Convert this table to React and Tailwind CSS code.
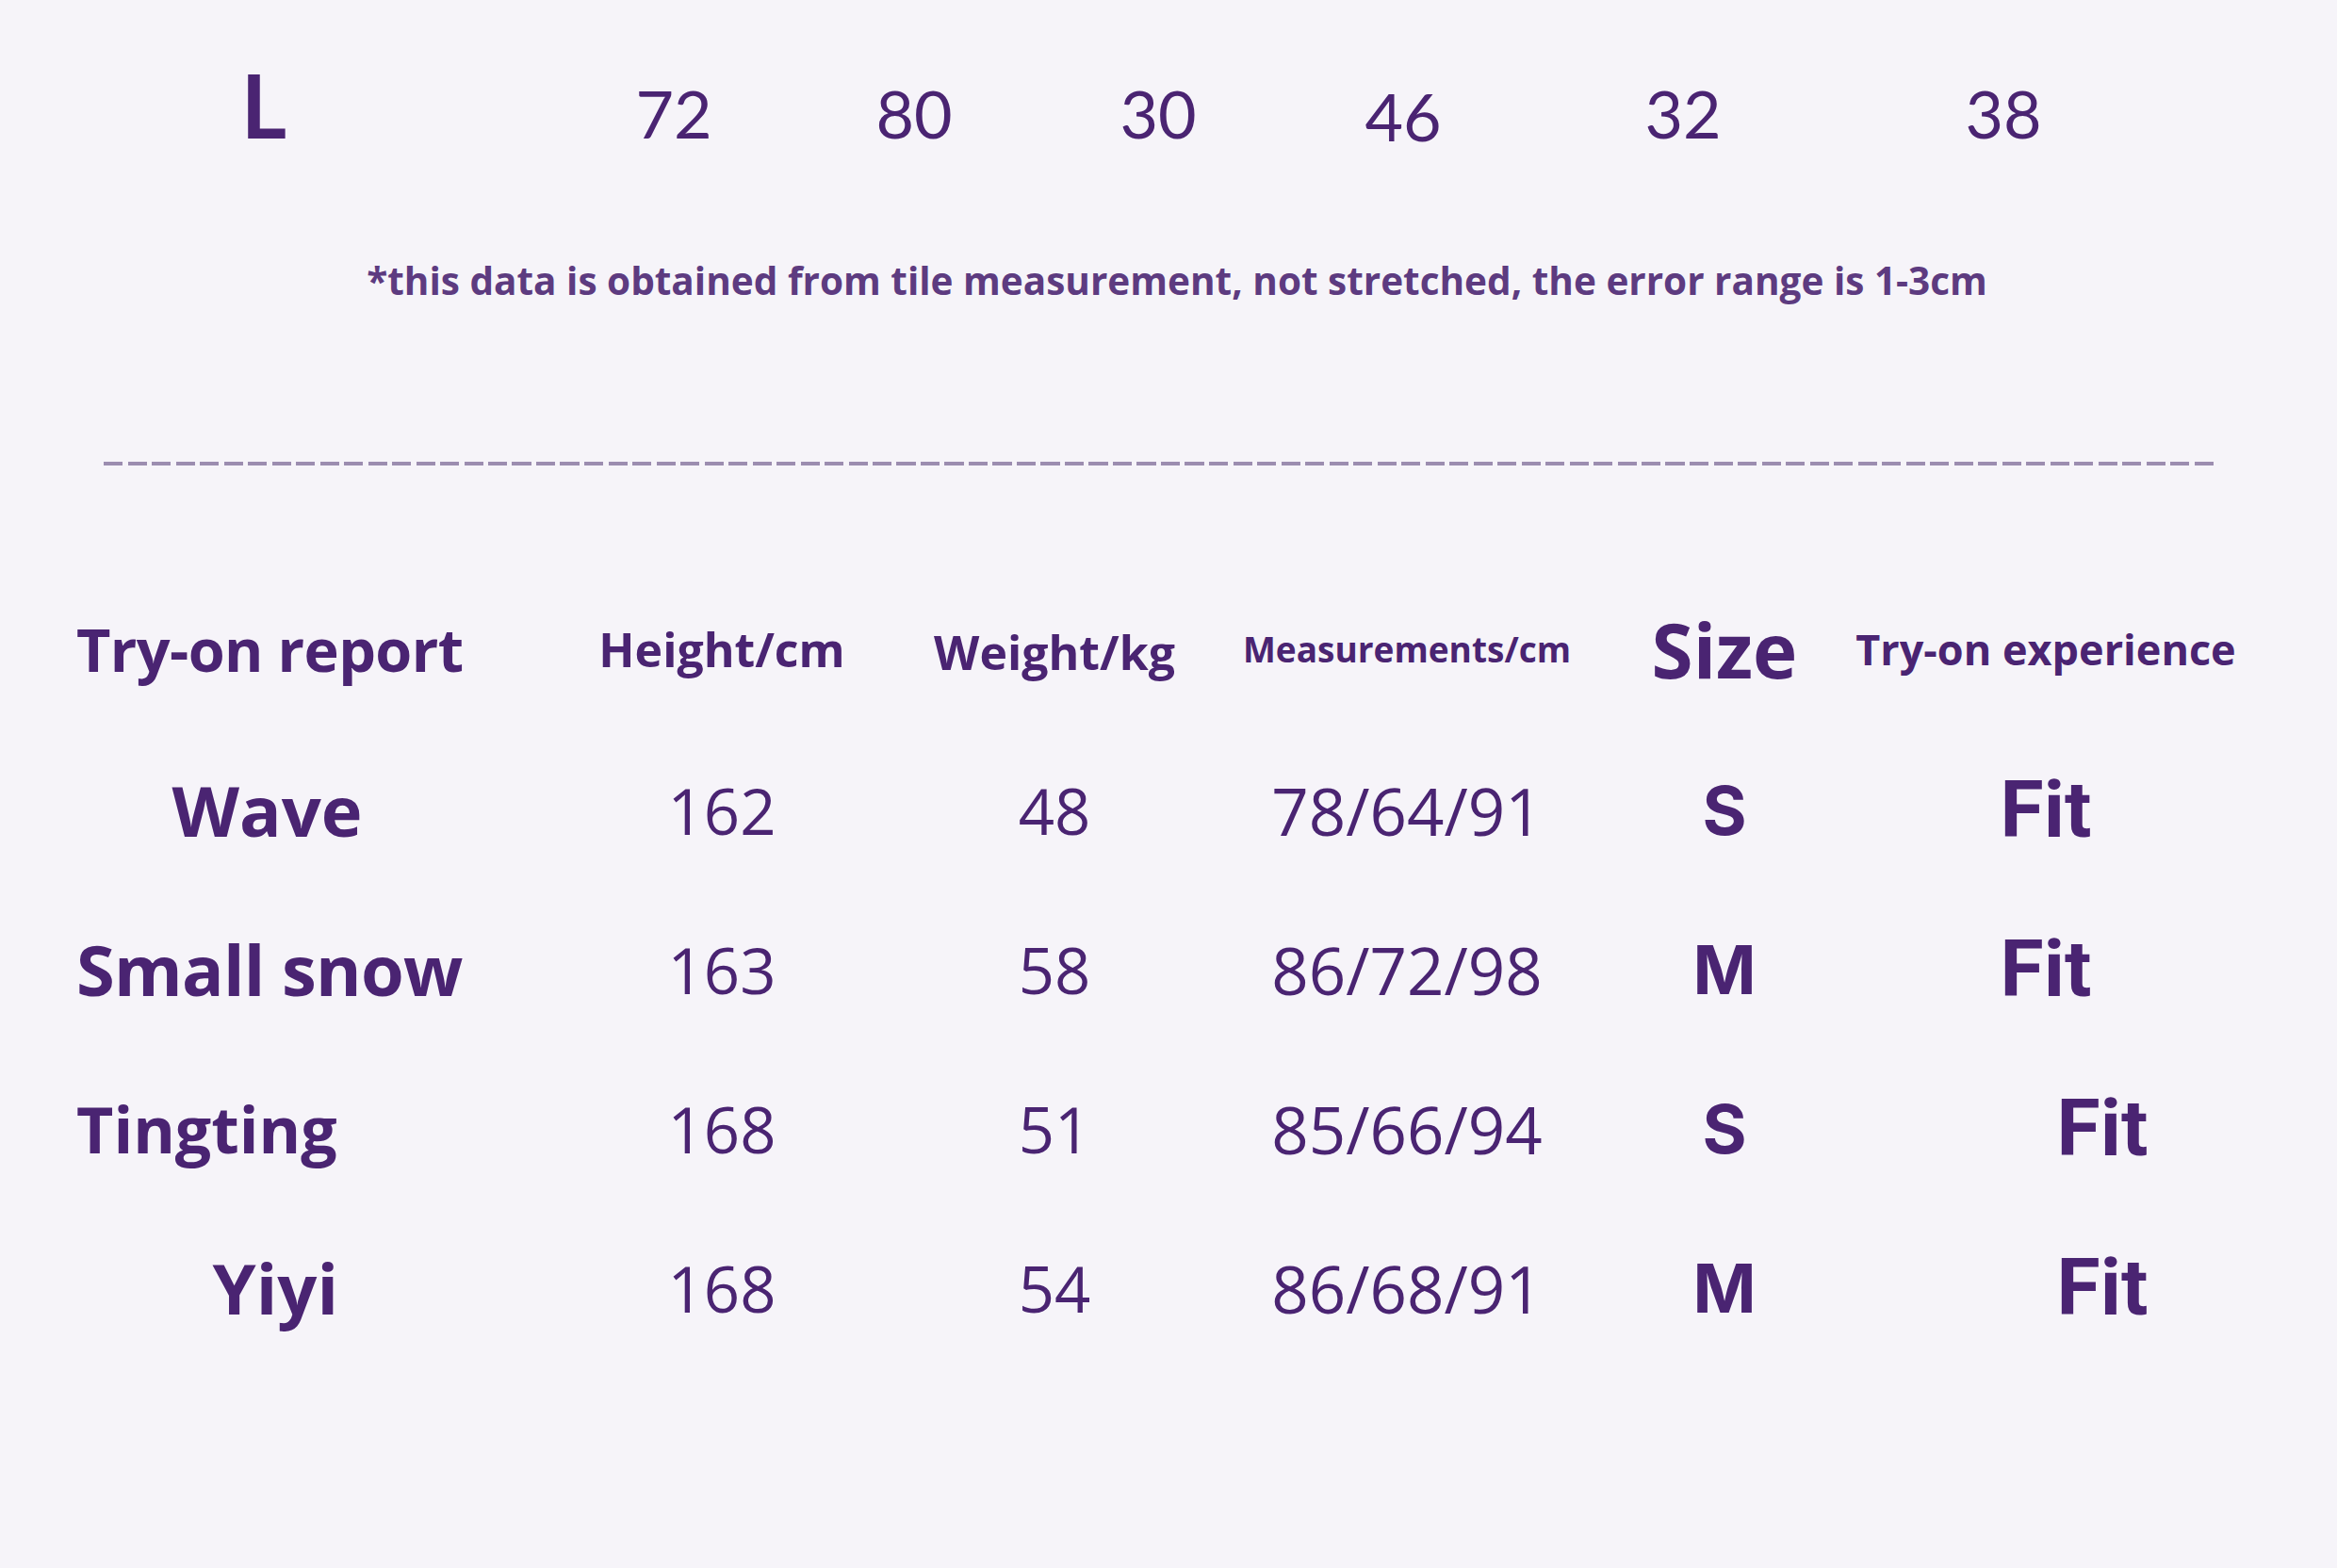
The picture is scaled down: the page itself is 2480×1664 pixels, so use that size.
import React from "react";

const sizeRow = [
  { v: "L", cls: "w-[200px] text-center text-[93px] font-bold" },
  { v: "72", cls: "ml-[235px] w-[200px] text-center text-[70px]" },
  { v: "80", cls: "ml-[55px] w-[200px] text-center text-[70px]" },
  { v: "30", cls: "ml-[59px] w-[200px] text-center text-[70px]" },
  { v: "46", cls: "ml-[60px] w-[200px] text-center text-[70px] translate-y-[3px]" },
  { v: "32", cls: "ml-[97px] w-[200px] text-center text-[70px]" },
  { v: "38", cls: "ml-[140px] w-[200px] text-center text-[70px]" },
];

// column slots shared by header and rows
const col = {
  name: "w-[405px] shrink-0 whitespace-nowrap",
  height: "ml-[130px] w-[300px] shrink-0 text-center",
  weight: "ml-[63px] w-[280px] shrink-0 text-center",
  meas: "ml-[44px] w-[380px] shrink-0 text-center",
  size: "ml-[62px] w-[170px] shrink-0 text-center",
  exp: "ml-[46px] w-[420px] shrink-0 whitespace-nowrap",
};

const people = [
  { name: "Wave", nameCls: "text-center text-[74px]", h: "162", w: "48", m: "78/64/91", s: "S", fitCls: "text-center" },
  { name: "Small snow", nameCls: "text-center text-[74px] tracking-[-0.01em]", h: "163", w: "58", m: "86/72/98", s: "M", fitCls: "text-center" },
  { name: "Tingting", nameCls: "text-left text-[68px]", h: "168", w: "51", m: "85/66/94", s: "S", fitCls: "text-center pl-[120px]" },
  { name: "Yiyi", nameCls: "text-right pr-[127px] text-[74px]", h: "168", w: "54", m: "86/68/91", s: "M", fitCls: "text-center pl-[120px]" },
];

const App = () => {
  return (
    <div className="w-[2480px] h-[1664px] bg-[#f6f4f9] text-[#4a2472] flex flex-col overflow-hidden font-['Open_Sans',sans-serif]">
      <div className="flex items-baseline pt-[65px] pl-[180px] leading-none font-['Lato',sans-serif]">
        {sizeRow.map((c, i) => (
          <div key={i} className={c.cls}>{c.v}</div>
        ))}
      </div>

      <p className="mt-[120px] pl-[18px] text-center text-[40.5px] leading-none font-bold text-[#5d3b80] whitespace-nowrap">
        *this data is obtained from tile measurement, not stretched, the error range is 1-3cm
      </p>

      <div className="mt-[171px] ml-[110px] w-[2243px] h-[4px] bg-[repeating-linear-gradient(90deg,#9c8db0_0px,#9c8db0_20px,transparent_20px,transparent_25.5px)]" />

      <div className="mt-[135px] h-[120px] flex items-center pl-[81px] leading-none font-bold">
        <div className={`${col.name} text-center text-[63px] tracking-[-0.01em]`}>Try-on report</div>
        <div className={`${col.height} text-[50px]`}>Height/cm</div>
        <div className={`${col.weight} text-[50px] translate-y-[3px]`}>Weight/kg</div>
        <div className={`${col.meas} text-[37px]`}>Measurements/cm</div>
        <div className={`${col.size} text-[80px]`}>Size</div>
        <div className={`${col.exp} text-center text-[45px]`}>Try-on experience</div>
      </div>

      <div className="mt-[27px] flex flex-col">
        {people.map((p) => (
          <div key={p.name} className="h-[169px] flex items-center pl-[81px] leading-none">
            <div className={`${col.name} ${p.nameCls} font-bold`}>{p.name}</div>
            <div className={`${col.height} text-[67px]`}>{p.h}</div>
            <div className={`${col.weight} text-[67px]`}>{p.w}</div>
            <div className={`${col.meas} text-[69px]`}>{p.m}</div>
            <div className={`${col.size} text-[72px] font-bold font-['Inter',sans-serif]`}>{p.s}</div>
            <div className={`${col.exp} ${p.fitCls} text-[84px] font-bold font-['Roboto',sans-serif]`}>Fit</div>
          </div>
        ))}
      </div>
    </div>
  );
};

export default App;
